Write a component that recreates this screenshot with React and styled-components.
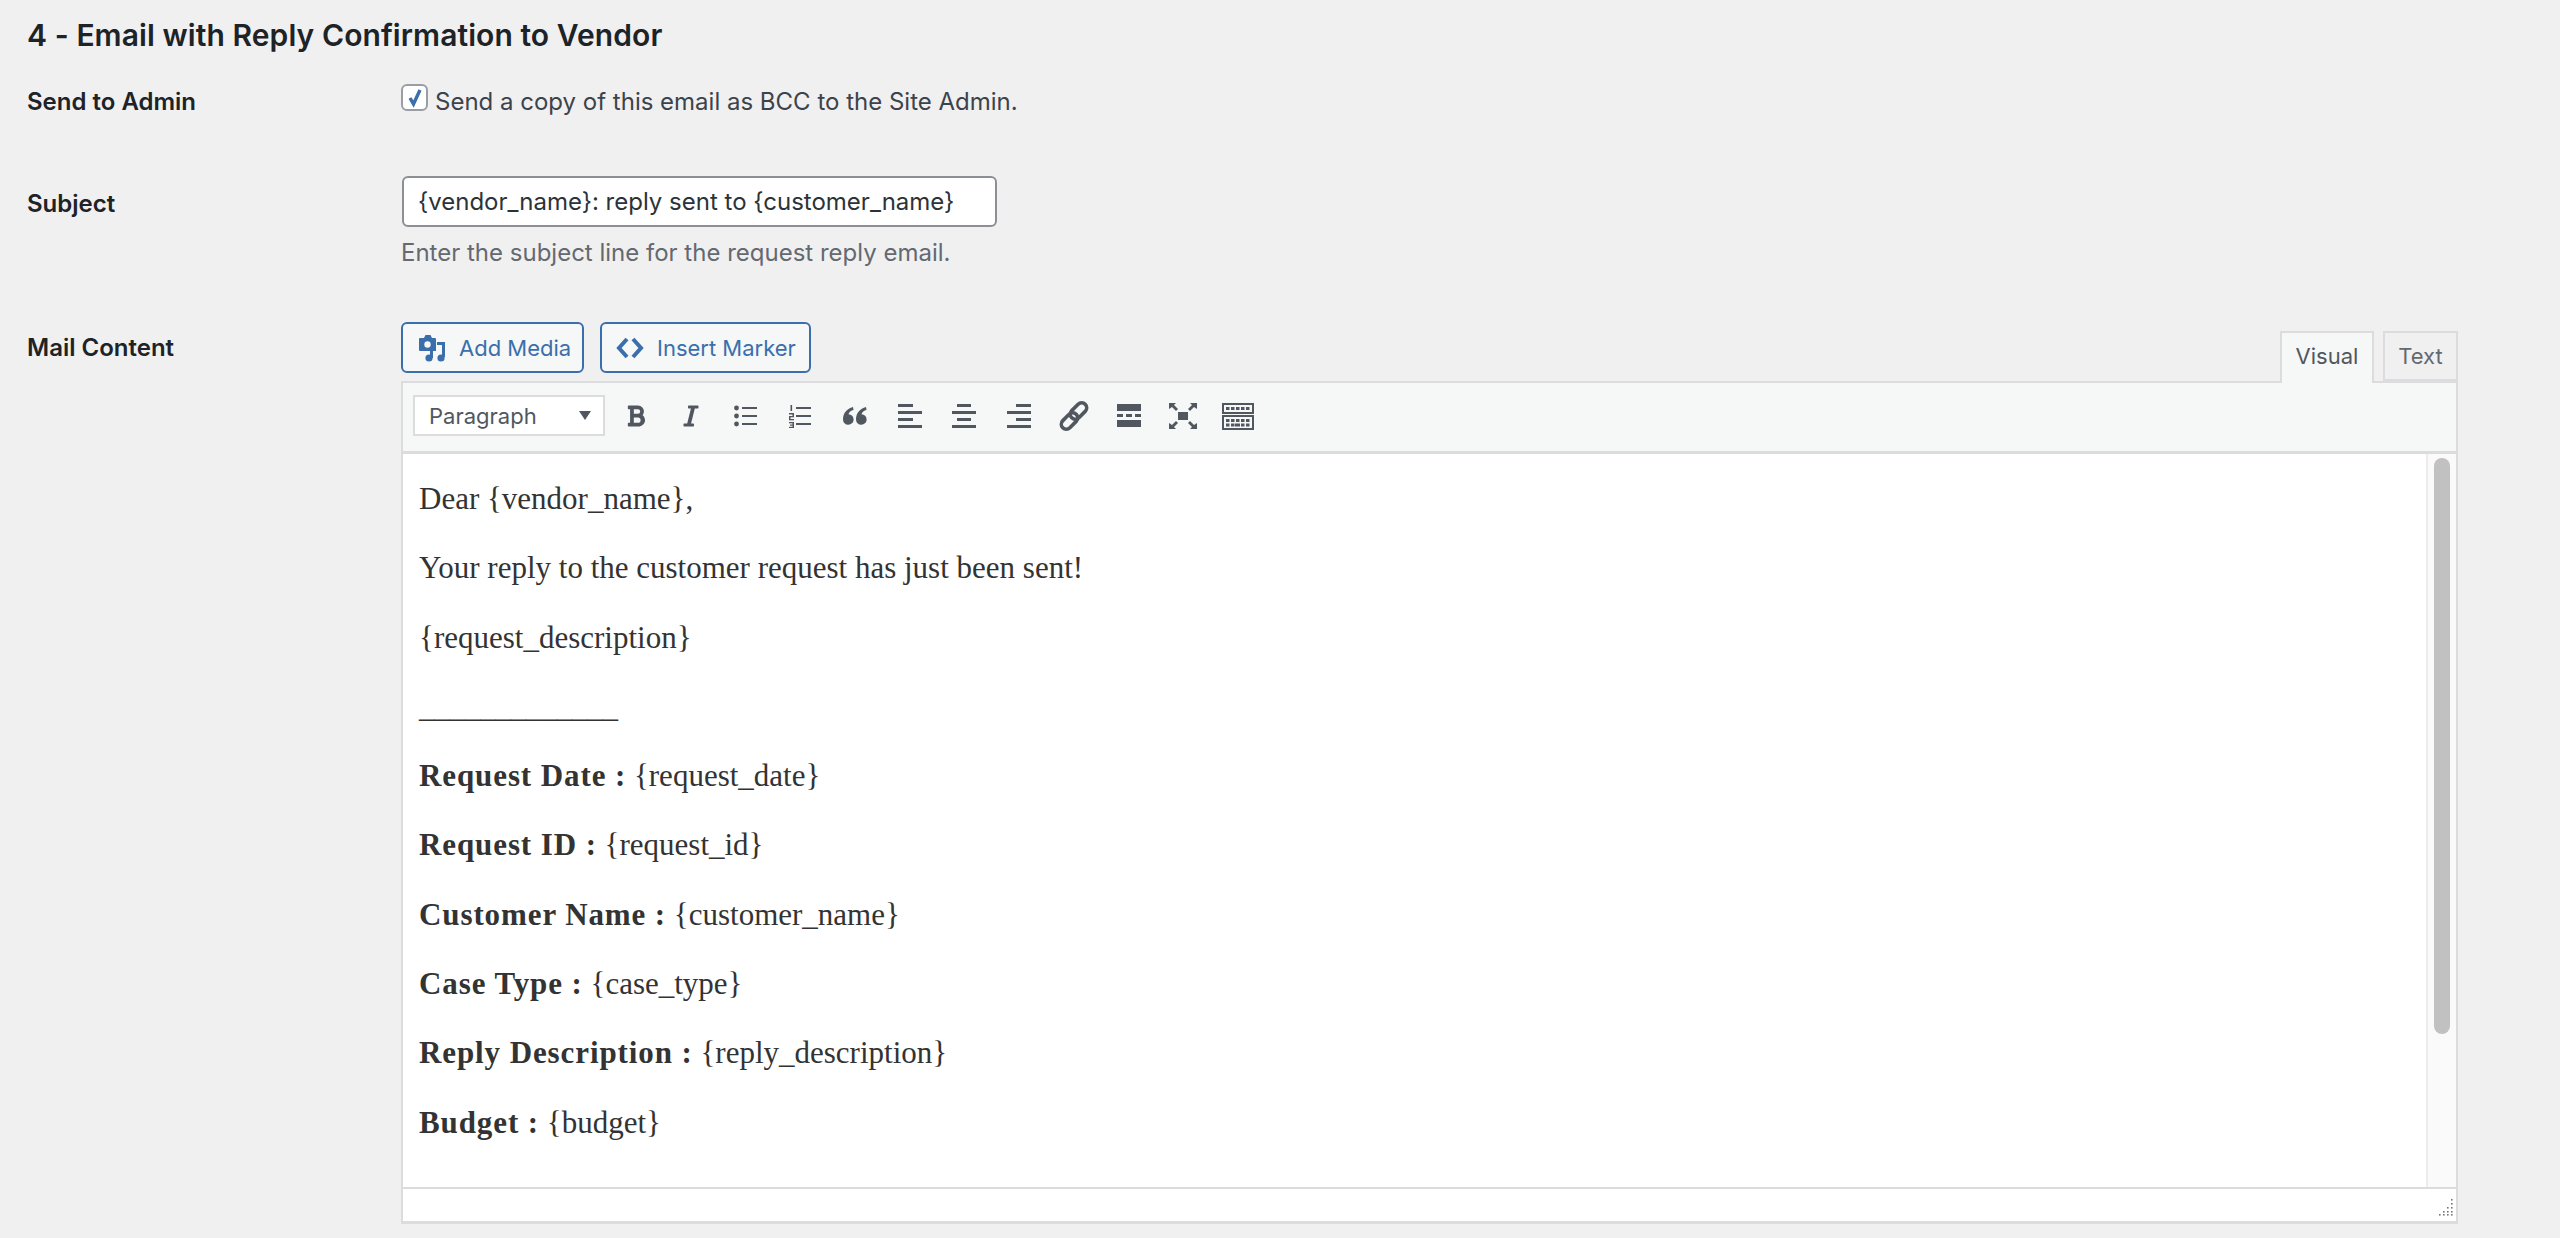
import React from "react";
import styled, { createGlobalStyle } from "styled-components";
import { FaBold, FaItalic } from "react-icons/fa";

const GlobalStyle = createGlobalStyle`
  html, body {
    margin: 0;
    height: 1238px;
    overflow: hidden;
    background: #f0f0f1;
    color: #3c434a;
    font-family: Inter, "Noto Sans", sans-serif;
  }
`;

const Page = styled.div`
  padding: 15px 102px 0 27px;
`;

const Title = styled.h2`
  margin: 0 0 31px;
  font-size: 30px;
  line-height: 40px;
  font-weight: 600;
  letter-spacing: 0.08px;
  color: #1d2327;
`;

const Row = styled.div`
  display: grid;
  grid-template-columns: 374px 1fr;
  margin-bottom: ${props => props.$gap || 0}px;
`;

const Label = styled.div`
  font-size: 24px;
  line-height: 32px;
  font-weight: 600;
  color: #1d2327;
  padding-top: ${props => props.$top || 0}px;
`;

const CheckLine = styled.label`
  display: flex;
  align-items: flex-start;
  gap: 7px;
  font-size: 24px;
  line-height: 32px;
`;

const CheckBox = styled.span`
  box-sizing: border-box;
  width: 27px;
  height: 27px;
  margin-top: -2px;
  flex: none;
  border: 2px solid #9a9da3;
  border-radius: 6px;
  background: #fff;
  display: flex;
  align-items: center;
  justify-content: center;
`;

const TextInput = styled.input`
  display: block;
  box-sizing: border-box;
  width: 595px;
  height: 51px;
  margin: -1px 0 1px 1px;
  padding: 0 14px;
  border: 2px solid #8c8f94;
  border-radius: 6px;
  background: #fff;
  color: #2c3338;
  font: 24px Inter, "Noto Sans", sans-serif;
  outline: none;
`;

const Help = styled.p`
  margin: 10px 0 0;
  font-size: 24px;
  line-height: 32px;
  color: #646970;
`;

const EditorTools = styled.div`
  display: flex;
  align-items: flex-end;
  justify-content: space-between;
`;

const MediaButtons = styled.div`
  display: flex;
  gap: 16px;
  padding-bottom: 8px;
`;

const MediaButton = styled.button`
  display: flex;
  align-items: center;
  gap: ${props => props.$gap}px;
  box-sizing: border-box;
  height: 51px;
  width: ${props => props.$width}px;
  padding: 0 0 0 14px;
  border: 2px solid #3a6fac;
  border-radius: 6px;
  background: #f6f7f7;
  color: #3a6fac;
  white-space: nowrap;
  font: 22px Inter, "Noto Sans", sans-serif;
`;

const Tabs = styled.div`
  display: flex;
  gap: 9px;
`;

const Tab = styled.div`
  box-sizing: border-box;
  width: ${props => props.$width}px;
  height: ${props => (props.$active ? 52 : 50)}px;
  margin-bottom: ${props => (props.$active ? -2 : 0)}px;
  border: 2px solid #dcdcde;
  border-bottom: ${props => (props.$active ? "none" : "2px solid #dcdcde")};
  background: ${props => (props.$active ? "#f6f7f7" : "#f0f0f1")};
  color: ${props => (props.$active ? "#50575e" : "#646970")};
  font-size: 22px;
  line-height: 46px;
  text-align: center;
`;

const Editor = styled.div`
  box-sizing: border-box;
  border: 2px solid #dcdcde;
  border-bottom-width: 3px;
  background: #fff;
`;

const Toolbar = styled.div`
  box-sizing: border-box;
  height: 71px;
  padding: 12px 10px 0;
  display: flex;
  align-items: flex-start;
  background: #f6f7f7;
  border-bottom: 3px solid #dcdcde;
`;

const FormatSelect = styled.div`
  box-sizing: border-box;
  width: 192px;
  height: 41px;
  padding: 0 14px;
  display: flex;
  align-items: center;
  justify-content: space-between;
  border: 2px solid #dcdcde;
  background: #fff;
  color: #50575e;
  font-size: 22px;
`;

const Caret = styled.span`
  width: 0;
  height: 0;
  margin-right: -2px;
  border-left: 6px solid transparent;
  border-right: 6px solid transparent;
  border-top: 9px solid #50575e;
`;

const ToolIcons = styled.div`
  display: flex;
  margin-left: 4px;
`;

const ToolIcon = styled.span`
  width: 54.7px;
  height: 41px;
  display: flex;
  align-items: center;
  justify-content: center;
  color: #50575e;
`;

const Content = styled.div`
  display: flex;
  height: 733px;
`;

const Body = styled.div`
  flex: 1;
  padding: 22px 16px 0;
  font-family: "Liberation Serif", serif;
  font-size: 31px;
  line-height: 45px;
  color: #333;

  strong {
    letter-spacing: 0.9px;
  }
`;

const Para = styled.p`
  margin: 0 0 24.3px;
  white-space: pre;
`;

const Rule = styled(Para)`
  letter-spacing: -0.2px;
`;

const Scrollbar = styled.div`
  box-sizing: border-box;
  width: 30px;
  padding: 4px 6px 0;
  border-left: 2px solid #ececec;
  background: #fafafa;
`;

const Thumb = styled.div`
  height: 576px;
  border-radius: 8px;
  background: #c1c1c1;
`;

const StatusBar = styled.div`
  box-sizing: border-box;
  height: 34px;
  padding: 9px 3px 0 0;
  display: flex;
  justify-content: flex-end;
  border-top: 2px solid #dcdcde;
`;

const MediaIcon = () => (
  <svg width="30" height="30" viewBox="0 0 30 30" fill="#3a6fac">
    <path d="M3 5h4l1.5-3h5L15 5h3a1 1 0 0 1 1 1v12H3a1 1 0 0 1-1-1V6a1 1 0 0 1 1-1z" />
    <circle cx="10.5" cy="11.5" r="3.2" fill="#f6f7f7" />
    <path d="M20 9h8v15h-3V12h-5z" />
    <circle cx="12" cy="25" r="3.6" />
    <circle cx="24" cy="25" r="3.6" />
    <path d="M13 18h3v7h-3z" />
  </svg>
);

const CodeIcon = () => (
  <svg width="28" height="24" viewBox="0 0 28 24" fill="none" stroke="#3a6fac" strokeWidth="4">
    <path d="M11 3 3 12l8 9M17 3l8 9-8 9" />
  </svg>
);

const Lines = ({ rows }) => (
  <svg width="24" height="26" viewBox="0 0 24 26" fill="#50575e">
    {rows.map(([x, y, w, h]) => (
      <rect key={`${x}-${y}`} x={x} y={y} width={w} height={h} />
    ))}
  </svg>
);

const BulletList = () => (
  <svg width="24" height="24" viewBox="0 0 24 24" fill="#50575e">
    <circle cx="2.5" cy="4" r="2.4" />
    <circle cx="2.5" cy="12" r="2.4" />
    <circle cx="2.5" cy="20" r="2.4" />
    <rect x="8" y="3" width="15" height="2" />
    <rect x="8" y="11" width="15" height="2" />
    <rect x="8" y="19" width="15" height="2" />
  </svg>
);

const NumberList = () => (
  <svg width="24" height="24" viewBox="0 0 24 24" fill="#50575e" stroke="none">
    <rect x="2.5" y="1" width="1.6" height="6" />
    <rect x="1" y="9" width="5" height="1.5" />
    <rect x="4.5" y="9" width="1.5" height="3" />
    <rect x="1" y="12" width="5" height="1.3" />
    <rect x="1" y="13" width="1.5" height="2" />
    <rect x="1" y="15" width="5" height="1.3" />
    <rect x="1" y="18" width="5" height="1.3" />
    <rect x="4.5" y="18" width="1.5" height="6" />
    <rect x="2" y="20.5" width="4" height="1.2" />
    <rect x="1" y="22.8" width="5" height="1.3" />
    <rect x="8" y="3" width="15" height="2" />
    <rect x="8" y="11" width="15" height="2" />
    <rect x="8" y="19" width="15" height="2" />
  </svg>
);

const QuoteIcon = () => (
  <svg width="26" height="20" viewBox="0 0 26 20" fill="#50575e">
    <path d="M11 1C5 2.500 1 7 1 13.500a5.300 5.300 0 1 0 5.500-5.300C7 6 9 4.500 11.500 4z" />
    <path d="M24 1c-6 1.500-10 6-10 12.500a5.300 5.300 0 1 0 5.500-5.300C20 6 22 4.500 24.500 4z" />
  </svg>
);

const LinkIcon = () => (
  <svg width="30" height="30" viewBox="0 0 30 30" fill="none" stroke="#50575e" strokeWidth="3.6">
    <rect x="1" y="15" width="19" height="10" rx="5" transform="rotate(-45 10.500 20)" />
    <rect x="10" y="5" width="19" height="10" rx="5" transform="rotate(-45 19.500 10)" />
  </svg>
);

const Fullscreen = () => (
  <svg width="28" height="26" viewBox="0 0 28 26" fill="#50575e">
    <rect x="9" y="9" width="10" height="8" />
    <path d="M0 0h7L5 2l4 4-2 2-4-4-3 2zM28 0h-7l2 2-4 4 2 2 4-4 3 2zM0 26h7l-2-2 4-4-2-2-4 4-3-2zM28 26h-7l2-2-4-4 2-2 4 4 3-2z" />
  </svg>
);

const Keyboard = () => (
  <svg width="32" height="28" viewBox="0 0 32 28" fill="#50575e">
    <path fillRule="evenodd" d="M0 1h32v11H0zM2 3v7h28V3zM0 13h32v15H0zM2 15v11h28V15z" />
    {[4, 9, 14, 19, 24].map(x => <rect key={x} x={x} y="5" width="3.5" height="3" />)}
    {[4, 9, 14, 19, 24].map(x => <rect key={x} x={x} y="17" width="3.5" height="3" />)}
    {[4, 9, 19, 24].map(x => <rect key={x} x={x} y="21.5" width="3.5" height="3" />)}
    <rect x="13" y="21.5" width="5" height="3" />
  </svg>
);

const Grip = () => (
  <svg width="16" height="18" viewBox="0 0 16 18" fill="#777">
    {[[14, 1], [14, 5], [14, 9], [14, 13], [14, 16], [10, 9], [10, 13], [10, 16], [6, 13], [6, 16], [2, 16]].map(([x, y]) => (
      <rect key={`${x}-${y}`} x={x} y={y} width="1.6" height="1.6" />
    ))}
  </svg>
);

const fields = [
  ["Request Date :", "{request_date}"],
  ["Request ID :", "{request_id}"],
  ["Customer Name :", "{customer_name}"],
  ["Case Type :", "{case_type}"],
  ["Reply Description :", "{reply_description}"],
  ["Budget :", "{budget}"],
];

const alignLeft = [[0, 1, 15, 3], [0, 8, 24, 3], [0, 15, 15, 3], [0, 22, 24, 3]];
const alignCenter = [[5, 1, 14, 3], [0, 8, 24, 3], [5, 15, 14, 3], [0, 22, 24, 3]];
const alignRight = [[9, 1, 15, 3], [0, 8, 24, 3], [9, 15, 15, 3], [0, 22, 24, 3]];
const readMore = [[0, 1, 24, 7], [0, 11, 6, 3], [9, 11, 6, 3], [18, 11, 6, 3], [0, 17, 24, 7]];

const App = () => {
  return (
    <Page>
      <GlobalStyle />
      <Title>4 - Email with Reply Confirmation to Vendor</Title>

      <Row $gap={59}>
        <Label>Send to Admin</Label>
        <CheckLine>
          <CheckBox>
            <svg width="20" height="20" viewBox="0 0 20 20" fill="none" stroke="#3a6fac" strokeWidth="3.4">
              <path d="M5 10l3.500 6L15 2" />
            </svg>
          </CheckBox>
          Send a copy of this email as BCC to the Site Admin.
        </CheckLine>
      </Row>

      <Row $gap={53}>
        <Label $top={11}>Subject</Label>
        <div>
          <TextInput readOnly value="{vendor_name}: reply sent to {customer_name}" />
          <Help>Enter the subject line for the request reply email.</Help>
        </div>
      </Row>

      <Row>
        <Label $top={10}>Mail Content</Label>
        <div>
          <EditorTools>
            <MediaButtons>
              <MediaButton $width={183} $gap={12}>
                <MediaIcon />
                Add Media
              </MediaButton>
              <MediaButton $width={211} $gap={13}>
                <CodeIcon />
                Insert Marker
              </MediaButton>
            </MediaButtons>
            <Tabs>
              <Tab $active $width={94}>Visual</Tab>
              <Tab $width={75}>Text</Tab>
            </Tabs>
          </EditorTools>
          <Editor>
            <Toolbar>
              <FormatSelect>
                Paragraph
                <Caret />
              </FormatSelect>
              <ToolIcons>
                <ToolIcon><FaBold size={24} /></ToolIcon>
                <ToolIcon><FaItalic size={24} /></ToolIcon>
                <ToolIcon><BulletList /></ToolIcon>
                <ToolIcon><NumberList /></ToolIcon>
                <ToolIcon><QuoteIcon /></ToolIcon>
                <ToolIcon><Lines rows={alignLeft} /></ToolIcon>
                <ToolIcon><Lines rows={alignCenter} /></ToolIcon>
                <ToolIcon><Lines rows={alignRight} /></ToolIcon>
                <ToolIcon><LinkIcon /></ToolIcon>
                <ToolIcon><Lines rows={readMore} /></ToolIcon>
                <ToolIcon><Fullscreen /></ToolIcon>
                <ToolIcon><Keyboard /></ToolIcon>
              </ToolIcons>
            </Toolbar>
            <Content>
              <Body>
                <Para>{"Dear {vendor_name},"}</Para>
                <Para>Your reply to the customer request has just been sent!</Para>
                <Para>{"{request_description}"}</Para>
                <Rule>_____________</Rule>
                {fields.map(([name, value]) => (
                  <Para key={name}>
                    <strong>{name}</strong> {value}
                  </Para>
                ))}
              </Body>
              <Scrollbar>
                <Thumb />
              </Scrollbar>
            </Content>
            <StatusBar>
              <Grip />
            </StatusBar>
          </Editor>
        </div>
      </Row>
    </Page>
  );
};

export default App;
